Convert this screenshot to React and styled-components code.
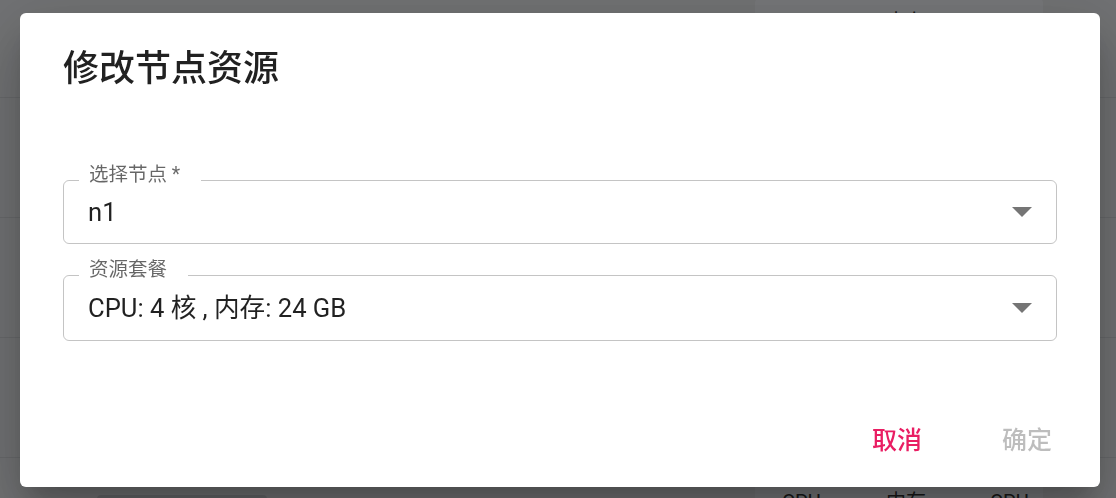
import React from "react";
import styled, { createGlobalStyle } from "styled-components";

const Global = createGlobalStyle`
  html, body { margin: 0; padding: 0; }
  body {
    font-family: Roboto, "Noto Sans CJK SC", sans-serif;
    background: #e3e5e8;
  }
`;

const Viewport = styled.div`
  position: relative;
  width: 100vw;
  height: 100vh;
  overflow: hidden;
`;

const PageBehind = styled.div`
  display: flex;
  flex-direction: column;
  margin-top: -23px;
`;

const BgRow = styled.div`
  height: 120px;
  box-sizing: border-box;
  border-top: 1px solid #d0d3d7;
  display: flex;
  align-items: flex-start;
  justify-content: space-between;
  padding: 19px 73px 0 97px;
`;

const BgTitle = styled.div`
  margin-top: 18px;
  width: 170px;
  height: 24px;
  border-radius: 4px;
  background: #c9ccd1;
`;

const BgChip = styled.div`
  width: 288px;
  height: 44px;
  box-sizing: border-box;
  padding: 15px 0 0 27px;
  border-radius: 6px;
  background: #eceff3;
  display: grid;
  grid-template-columns: 104px 104px 80px;
`;

const BgHead = styled.span`
  font-size: 20px;
  line-height: 20px;
  color: #333;
`;

const Backdrop = styled.div`
  position: fixed;
  inset: 0;
  background: rgba(0, 0, 0, 0.5);
  display: flex;
  align-items: center;
  justify-content: center;
`;

const Dialog = styled.div`
  width: 1080px;
  height: 474px;
  margin: 2px 0 0 4px;
  box-sizing: border-box;
  background: #fff;
  border-radius: 6px;
  display: flex;
  flex-direction: column;
  box-shadow: 0 17px 23px -10px rgba(0, 0, 0, 0.2),
    0 36px 57px 5px rgba(0, 0, 0, 0.14), 0 14px 69px 12px rgba(0, 0, 0, 0.12);
`;

const Title = styled.h2`
  margin: 0;
  padding: 38px 43px 0;
  font-size: 36px;
  line-height: 36px;
  font-weight: 500;
  color: rgba(0, 0, 0, 0.87);
`;

const Fields = styled.div`
  display: flex;
  flex-direction: column;
  gap: 31px;
  padding: 0 43px;
  margin-top: 93px;
`;

const Field = styled.div`
  position: relative;
  height: ${(p) => p.$h}px;
  box-sizing: border-box;
  border: 1px solid rgba(0, 0, 0, 0.23);
  border-radius: 6px;
  display: flex;
  align-items: center;
  padding: 0 24px;
`;

const FieldLabel = styled.span`
  position: absolute;
  top: -16.5px;
  left: 15px;
  padding: 0 21px 0 10px;
  background: #fff;
  font-size: 19.5px;
  line-height: 20px;
  color: rgba(0, 0, 0, 0.6);
  white-space: nowrap;
`;

const Value = styled.span`
  flex: 1;
  font-size: 25.6px;
  line-height: 30px;
  color: rgba(0, 0, 0, 0.87);
`;

const Arrow = styled.svg`
  width: 20px;
  height: 10px;
  flex: none;
  fill: rgba(0, 0, 0, 0.54);
`;

const Actions = styled.div`
  margin-top: auto;
  display: flex;
  justify-content: flex-end;
  gap: 56px;
  padding: 0 36px 26px;
`;

const Button = styled.button`
  border: 0;
  background: transparent;
  padding: 8px 12px;
  font-family: inherit;
  font-size: 25px;
  line-height: 25px;
  font-weight: 500;
  color: ${(p) => (p.disabled ? "rgba(0,0,0,0.26)" : "#e91e63")};
  cursor: ${(p) => (p.disabled ? "default" : "pointer")};
`;

const DropArrow = () => (
  <Arrow viewBox="0 0 20 10">
    <polygon points="0,0 20,0 10,10" />
  </Arrow>
);

const SelectField = ({ label, value, h }) => (
  <Field $h={h}>
    <FieldLabel>{label}</FieldLabel>
    <Value>{value}</Value>
    <DropArrow />
  </Field>
);

export default function App() {
  return (
    <Viewport>
      <Global />
      <PageBehind>
        {[0, 1, 2, 3, 4].map((i) => (
          <BgRow key={i}>
            <BgTitle />
            <BgChip>
              <BgHead>CPU</BgHead>
              <BgHead>内存</BgHead>
              <BgHead>CPU</BgHead>
            </BgChip>
          </BgRow>
        ))}
      </PageBehind>
      <Backdrop>
        <Dialog role="dialog">
          <Title>修改节点资源</Title>
          <Fields>
            <SelectField label="选择节点 *" value="n1" h={64} />
            <SelectField label="资源套餐" value="CPU: 4 核 , 内存: 24 GB" h={66} />
          </Fields>
          <Actions>
            <Button>取消</Button>
            <Button disabled>确定</Button>
          </Actions>
        </Dialog>
      </Backdrop>
    </Viewport>
  );
}
